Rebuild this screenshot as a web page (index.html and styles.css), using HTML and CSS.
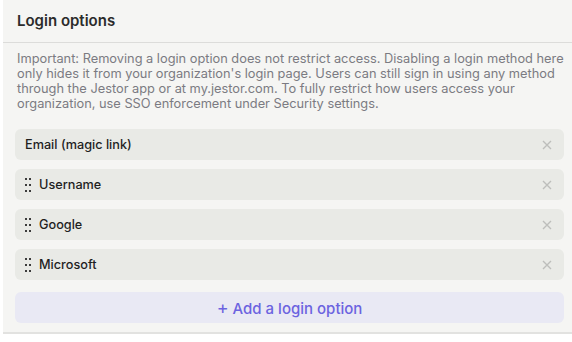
FILE: index.html
```html
<!DOCTYPE html>
<html lang="en">
<head>
    <meta charset="UTF-8">
    <meta name="viewport" content="width=device-width, initial-scale=1.0">
    <title>Login options</title>
    <link rel="stylesheet" href="styles.css">
</head>
<body>
    <div class="panel">
        <div class="panel-header">Login options</div>
        <div class="panel-body">
            <p class="notice">Important: Removing a login option does not restrict access. Disabling a login method here only hides it from your organization's login page. Users can still sign in using any method through the Jestor app or at my.jestor.com. To fully restrict how users access your organization, use SSO enforcement under Security settings.</p>

            <div class="options">
                <div class="option">
                    <span class="label">Email (magic link)</span>
                    <svg class="remove" width="10" height="10" viewBox="0 0 10 10"><path d="M1 1L9 9M9 1L1 9"/></svg>
                </div>
                <div class="option">
                    <span class="handle"><i></i><i></i><i></i><i></i><i></i><i></i></span>
                    <span class="label">Username</span>
                    <svg class="remove" width="10" height="10" viewBox="0 0 10 10"><path d="M1 1L9 9M9 1L1 9"/></svg>
                </div>
                <div class="option">
                    <span class="handle"><i></i><i></i><i></i><i></i><i></i><i></i></span>
                    <span class="label">Google</span>
                    <svg class="remove" width="10" height="10" viewBox="0 0 10 10"><path d="M1 1L9 9M9 1L1 9"/></svg>
                </div>
                <div class="option">
                    <span class="handle"><i></i><i></i><i></i><i></i><i></i><i></i></span>
                    <span class="label">Microsoft</span>
                    <svg class="remove" width="10" height="10" viewBox="0 0 10 10"><path d="M1 1L9 9M9 1L1 9"/></svg>
                </div>
            </div>

            <button class="add-btn"><span class="plus">+</span> Add a login option</button>
        </div>
    </div>
</body>
</html>
```

FILE: styles.css
```css
body { margin: 0; background: #fff; font-family: Inter, "Noto Sans", sans-serif; }

.panel {
    margin-left: 3px;
    background: #f5f5f3;
    border-bottom: 2px solid #e2e2e0;
    height: 334px;
    box-sizing: border-box;
}

.panel-header {
    height: 42px;
    line-height: 42px;
    padding-left: 14px;
    font-size: 15px;
    font-weight: 600;
    color: #2b2b2b;
    border-bottom: 1px solid #dcdcda;
}

.panel-body { padding: 8px 8px 0 12px; }

.notice {
    margin: 0 0 18px 2px;
    font-size: 12.8px;
    line-height: 15px;
    color: #7b7b82;
}

.options { display: flex; flex-direction: column; gap: 9px; }

.option {
    display: flex;
    align-items: center;
    height: 31px;
    padding: 0 12px 0 10px;
    background: #e9eae6;
    border-radius: 6px;
}
.label { flex: 1; font-size: 12.7px; font-weight: 500; color: #1f1f1f; }
.remove { stroke: #bdbebb; stroke-width: 1.4; fill: none; }

.handle {
    display: grid;
    grid-template-columns: 2px 2px;
    column-gap: 2px;
    row-gap: 4px;
    margin: 0 8px 0 0;
}
.handle i { width: 2px; height: 2px; background: #3c3c3c; }

.add-btn {
    display: block;
    width: 100%;
    height: 31px;
    margin-top: 12px;
    border: none;
    border-radius: 6px;
    background: #e9e9f4;
    color: #6c63e0;
    font-family: inherit;
    font-size: 15px;
    font-weight: 500;
    cursor: pointer;
}
.plus { font-size: 18px; font-weight: 400; }
```
